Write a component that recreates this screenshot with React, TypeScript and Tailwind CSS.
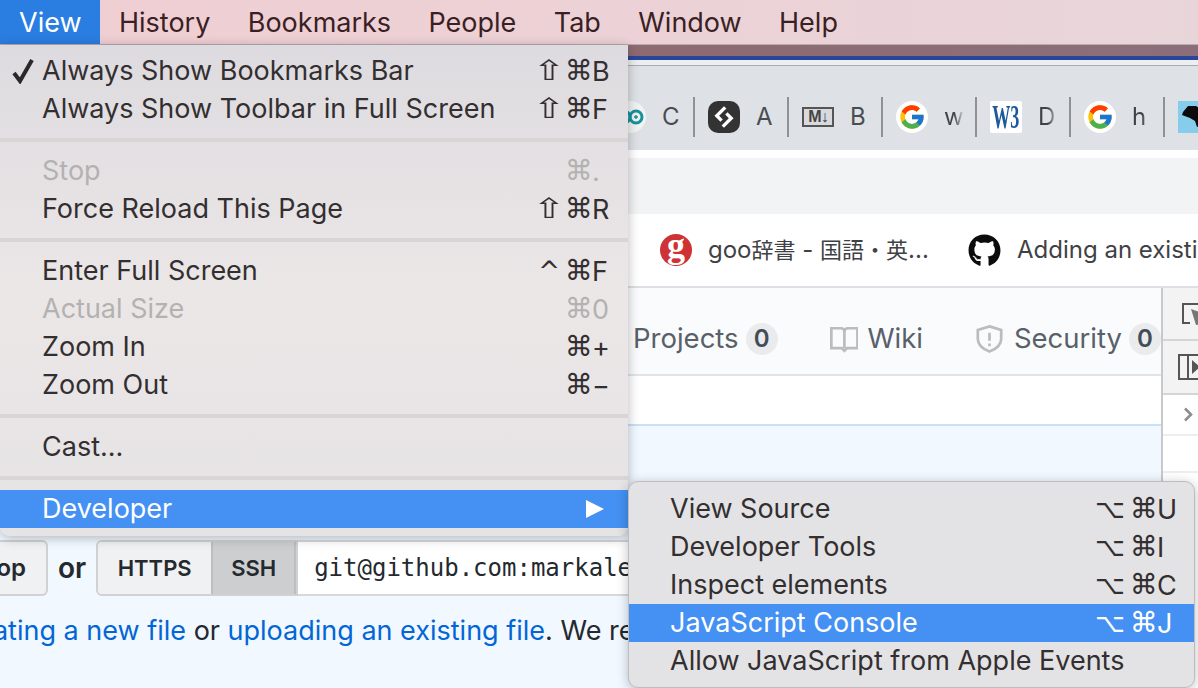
import type { ReactNode } from "react";
import { FcGoogle } from "react-icons/fc";
import { FaGithub } from "react-icons/fa";

const MENU_BAR = ["History", "Bookmarks", "People", "Tab", "Window", "Help"];

interface MenuItem {
  label: string;
  mod?: string;
  keyName?: string;
  noCmd?: boolean;
  disabled?: boolean;
  checked?: boolean;
  active?: boolean;
  arrow?: boolean;
}

const MAIN_MENU: MenuItem[][] = [
  [
    { label: "Always Show Bookmarks Bar", mod: "⇧", keyName: "B", checked: true },
    { label: "Always Show Toolbar in Full Screen", mod: "⇧", keyName: "F" },
  ],
  [
    { label: "Stop", keyName: ".", disabled: true },
    { label: "Force Reload This Page", mod: "⇧", keyName: "R" },
  ],
  [
    { label: "Enter Full Screen", mod: "^", keyName: "F" },
    { label: "Actual Size", keyName: "0", disabled: true },
    { label: "Zoom In", keyName: "+" },
    { label: "Zoom Out", keyName: "−" },
  ],
  [{ label: "Cast...", noCmd: true }],
  [{ label: "Developer", active: true, arrow: true, noCmd: true }],
];

const DEV_MENU: MenuItem[] = [
  { label: "View Source", mod: "⌥", keyName: "U" },
  { label: "Developer Tools", mod: "⌥", keyName: "I" },
  { label: "Inspect elements", mod: "⌥", keyName: "C" },
  { label: "JavaScript Console", mod: "⌥", keyName: "J", active: true },
  { label: "Allow JavaScript from Apple Events", noCmd: true },
];

function Shortcut({ item }: { item: MenuItem }) {
  if (item.noCmd) return null;
  return (
    <span className="flex items-center font-['DejaVu_Sans',sans-serif] leading-none">
      {item.mod === "⇧" ? (
        <span className="mr-[4px] inline-block w-[22px] scale-x-[1.4] text-center text-[28px]">{item.mod}</span>
      ) : (
        <span className="mr-[3px] text-[26px]">{item.mod}</span>
      )}
      <span className="w-[29px] pl-[2px] text-[28px]">⌘</span>
      <span className="w-[18px] font-['Inter',sans-serif] text-[27px]">{item.keyName}</span>
    </span>
  );
}

function Row({ item, inset }: { item: MenuItem; inset: string }) {
  const color = item.active
    ? "bg-[#4490f3] text-white"
    : item.disabled
      ? "text-[#b4b1b1]"
      : "text-[#332f30]";
  return (
    <div className={`relative flex h-[38px] items-center justify-between ${inset} ${color}`}>
      {item.checked && (
        <svg viewBox="0 0 24 26" className="absolute left-[11px] top-[6px] h-[26px] w-[24px]">
          <path d="M3 15 L9 23 L21 2" fill="none" stroke="#2b2829" strokeWidth="4" />
        </svg>
      )}
      <span>{item.label}</span>
      {item.arrow ? (
        <svg viewBox="0 0 18 18" className="mr-[6px] h-[18px] w-[18px]">
          <polygon points="0,0 18,9 0,18" fill="#fff" />
        </svg>
      ) : (
        <Shortcut item={item} />
      )}
    </div>
  );
}

function MainMenu() {
  return (
    <div className="absolute left-0 top-[45px] w-[628px] rounded-b-[10px] bg-gradient-to-b from-[#dedbe0] via-[#ebe7e7] to-[#e6e3e5] pb-[8px] pt-[7px] text-[27px] shadow-[0_2px_12px_rgba(0,0,0,0.28)]">
      {MAIN_MENU.map((section, i) => (
        <div key={i}>
          {i > 0 && <div className="my-[10px] h-[4px] bg-[#d9d5d5]" />}
          {section.map((item) => (
            <Row key={item.label} item={item} inset="pl-[42px] pr-[18px]" />
          ))}
        </div>
      ))}
    </div>
  );
}

function DevMenu() {
  return (
    <div className="absolute left-[628px] top-[481px] h-[207px] w-[567px] rounded-[10px] border border-[#bdbdbf] bg-[#e3e3e5] pt-[8px] text-[27px] shadow-[0_2px_12px_rgba(0,0,0,0.25)]">
      {DEV_MENU.map((item) => (
        <Row key={item.label} item={item} inset="pl-[41px] pr-[19px]" />
      ))}
    </div>
  );
}

function MenuBar() {
  return (
    <div className="flex h-[45px] shrink-0 border-b border-[#b7acb0] bg-gradient-to-r from-[#f0ced2] to-[#e8d5da] text-[27px] text-[#3a1f24]">
      <div className="flex w-[100px] items-center bg-[#2a7de1] pl-[19px] pt-[2px] text-white">View</div>
      <div className="flex items-center pl-[19px] pt-[2px]">
        {MENU_BAR.map((name) => (
          <span key={name} className="px-[18.7px] first:pl-0">
            {name}
          </span>
        ))}
      </div>
    </div>
  );
}

function SketchIcon() {
  return (
    <div className="flex h-[32px] w-[32px] items-center justify-center rounded-[10px] bg-[#333333]">
      <svg viewBox="0 0 20 20" className="h-[24px] w-[24px]">
        <path d="M11 2 L4 9 L8 13 M9 18 L16 11 L12 7" fill="none" stroke="#fff" strokeWidth="2.8" />
      </svg>
    </div>
  );
}

function ArduinoIcon() {
  return (
    <div className="h-[32px] w-[32px] rounded-full bg-[#f1f3f3]">
      <svg viewBox="0 0 32 32" className="h-[32px] w-[32px]">
        <circle cx="10" cy="16" r="6" fill="none" stroke="#17919a" strokeWidth="3" />
        <circle cx="22" cy="16" r="6" fill="none" stroke="#17919a" strokeWidth="3" />
        <path d="M20 16h4M22 14v4" stroke="#17919a" strokeWidth="1.4" />
      </svg>
    </div>
  );
}

function MarkdownIcon() {
  return (
    <div className="flex h-[20px] w-[32px] items-center justify-center border-2 border-[#555555] bg-[#d8dadd] font-['Liberation_Sans',sans-serif] text-[16px] font-bold leading-none tracking-[-1px] text-[#444444]">
      M↓
    </div>
  );
}

function GoogleIcon() {
  return (
    <div className="flex h-[32px] w-[32px] items-center justify-center rounded-full bg-white">
      <FcGoogle className="h-[28px] w-[28px]" />
    </div>
  );
}

function W3Icon() {
  return (
    <div className="flex h-[32px] w-[32px] items-center justify-center rounded-[2px] bg-white font-['Liberation_Serif',serif] text-[33px] font-bold leading-none text-[#1d5a9c]">
      <span className="scale-x-[0.55]">W3</span>
    </div>
  );
}

function BlobIcon() {
  return (
    <div className="h-[32px] w-[32px] bg-[#86cdec]">
      <svg viewBox="0 0 32 32" className="h-[32px] w-[32px]">
        <path d="M5 11 L10 5 L18 5 L24 9 L28 16 L24 24 L19 26 L17 20 L12 17 L4 14 Z" fill="#0b0b0b" />
      </svg>
    </div>
  );
}

const TABS: { icon: ReactNode; letter: string; fade?: boolean }[] = [
  { icon: <ArduinoIcon />, letter: "C" },
  { icon: <SketchIcon />, letter: "A" },
  { icon: <MarkdownIcon />, letter: "B" },
  { icon: <GoogleIcon />, letter: "w", fade: true },
  { icon: <W3Icon />, letter: "D", fade: true },
  { icon: <GoogleIcon />, letter: "h", fade: true },
  { icon: <BlobIcon />, letter: "" },
];

function BrowserTop() {
  return (
    <>
      <div className="h-[11px] shrink-0 bg-gradient-to-r from-[#6c5a68] via-[#8e6a70] to-[#8c6e7a]" />
      <div className="h-[4px] shrink-0 bg-[#29479a]" />
      <div className="h-[6px] shrink-0 border-b border-[#a9abad] bg-[#eceef0]" />
      <div className="flex h-[84px] shrink-0 bg-[#dee1e6] pl-[601px] pt-[31px]">
        {TABS.map((tab, i) => (
          <div
            key={i}
            className="flex h-[40px] w-[94px] shrink-0 items-center gap-[16px] border-r-2 border-[#8f9295] pl-[13px] last:border-r-0"
          >
            <div className="flex h-[32px] w-[32px] shrink-0 items-center justify-center">{tab.icon}</div>
            <span
              className={`w-[20px] overflow-hidden text-[24px] ${
                tab.fade
                  ? "bg-gradient-to-r from-[#3f4245] from-50% to-[#dee1e6] bg-clip-text text-transparent"
                  : "text-[#4a4d50]"
              }`}
            >
              {tab.letter}
            </span>
          </div>
        ))}
      </div>
      <div className="h-[8px] shrink-0 bg-white" />
      <div className="h-[56px] shrink-0 bg-[#f1f3f4]" />
      <div className="flex h-[72px] shrink-0 items-center whitespace-nowrap bg-white pl-[660px] text-[24px] text-[#3f4245]">
        <div className="flex h-[32px] w-[32px] shrink-0 items-center justify-center rounded-full bg-[#cf3234] font-['Liberation_Serif',serif] text-[36px] font-bold leading-none text-white">
          <span className="-mt-[10px]">g</span>
        </div>
        <span className="ml-[16px] w-[260px] shrink-0">
          goo<span className="font-['Noto_Sans_CJK_JP',sans-serif] text-[22px]">辞書</span> -{" "}
          <span className="font-['Noto_Sans_CJK_JP',sans-serif] text-[22px]">国語・英</span>...
        </span>
        <FaGithub className="h-[33px] w-[33px] shrink-0 text-[#0c0c0c]" />
        <span className="ml-[16px]">Adding an existing</span>
      </div>
    </>
  );
}

function CountBadge() {
  return (
    <span className="flex h-[32px] w-[32px] shrink-0 items-center justify-center rounded-full bg-[#e9ebed] text-[24px] font-semibold text-[#444d56]">
      0
    </span>
  );
}

function RepoNav() {
  return (
    <div className="flex h-[88px] shrink-0 items-center whitespace-nowrap border-b-2 border-[#e1e4e8] bg-[#fafbfc] pl-[633px] pt-[16px] text-[27.5px] text-[#586069]">
      <span>Projects</span>
      <span className="ml-[7px]">
        <CountBadge />
      </span>
      <svg viewBox="0 0 32 29" className="ml-[52px] h-[29px] w-[32px]">
        <path
          d="M1.5 2 H12 Q16 2 16 6 Q16 2 20 2 H30.5 V24 H19 L16 27 L13 24 H1.5 Z M16 6 V24"
          fill="none"
          stroke="#babcbe"
          strokeWidth="3"
        />
      </svg>
      <span className="ml-[9px]">Wiki</span>
      <svg viewBox="0 0 30 32" className="ml-[53px] h-[32px] w-[30px]">
        <path d="M15 2 L28 6 V16 Q28 25 15 30 Q2 25 2 16 V6 Z" fill="none" stroke="#babcbe" strokeWidth="3" />
        <path d="M15 9 V18 M15 21 V24" stroke="#babcbe" strokeWidth="3" />
      </svg>
      <span className="ml-[11px]">Security</span>
      <span className="ml-[7px]">
        <CountBadge />
      </span>
    </div>
  );
}

function CloneRow() {
  return (
    <div className="flex h-[56px] items-stretch whitespace-nowrap">
      <div className="flex w-[48px] justify-end overflow-hidden rounded-r-[6px] border-2 border-l-0 border-[#cfd1d3] bg-[#f0f1f2] pr-[20px]">
        <span className="self-center text-[24px] font-semibold text-[#24292e]">Desktop</span>
      </div>
      <span className="ml-[10px] self-center text-[28px] font-semibold text-[#24292e]">or</span>
      <div className="ml-[10px] flex overflow-hidden rounded-l-[6px] border-2 border-[#cfd1d3] text-[22px] font-semibold text-[#24292e]">
        <span className="flex w-[113px] items-center justify-center bg-[#f0f1f2]">HTTPS</span>
        <span className="flex w-[85px] items-center justify-center border-x-2 border-[#bdbebf] bg-[#cdcecf]">SSH</span>
      </div>
      <div className="flex flex-1 items-center border-y-2 border-[#d6d8da] bg-white pl-[16px] font-['DejaVu_Sans_Mono',monospace] text-[24px] text-[#24292e]">
        git@github.com:markalex/repo.git
      </div>
    </div>
  );
}

function RepoBody() {
  return (
    <div className="flex min-h-0 flex-1 border-t-2 border-[#dcdfe3]">
      <div className="flex w-[1161px] shrink-0 flex-col">
        <RepoNav />
        <div className="h-[50px] shrink-0 border-b-2 border-[#c9e0f7] bg-white" />
        <div className="flex-1 bg-[#f1f8ff] pt-[114px]">
          <CloneRow />
          <p className="-ml-[87px] mt-[15px] whitespace-nowrap text-[27px] text-[#24292e]">
            <span className="text-[#0366d6]">by creating a new file</span> or{" "}
            <span className="text-[#0366d6]">uploading an existing file</span>. We recommend every repository
          </p>
        </div>
      </div>
      <div className="flex-1 border-l-2 border-[#c8c9ca]">
        <div className="flex h-[53px] items-center border-b-2 border-[#d4d5d6] bg-[#f3f3f3] pl-[19px]">
          <svg viewBox="0 0 20 24" className="h-[24px] w-[20px] shrink-0">
            <path d="M19 2 H1 V21 H8" fill="none" stroke="#555" strokeWidth="2" />
            <path d="M9 7 L20 11 V22 L14 23 Z" fill="#777" />
          </svg>
        </div>
        <div className="flex h-[54px] items-center border-b-2 border-[#d4d5d6] bg-[#f3f3f3] pl-[15px]">
          <svg viewBox="0 0 22 26" className="h-[26px] w-[22px] shrink-0">
            <path d="M22 1 H1 V25 H22 M10 1 V25" fill="none" stroke="#555" strokeWidth="2" />
            <polygon points="14,6 22,13 14,20" fill="#555" />
          </svg>
        </div>
        <div className="flex h-[41px] items-center border-b-2 border-[#eeeeee] bg-white pl-[20px]">
          <svg viewBox="0 0 10 15" className="h-[15px] w-[10px]">
            <path d="M2 1.5 L8 7.5 L2 13.5" fill="none" stroke="#8d8d8d" strokeWidth="2.6" />
          </svg>
        </div>
        <div className="h-[37px] border-b-2 border-[#eeeeee] bg-white" />
      </div>
    </div>
  );
}

export default function App() {
  return (
    <div className="relative flex h-[688px] w-[1198px] flex-col overflow-hidden bg-white font-['Inter',sans-serif]">
      <MenuBar />
      <BrowserTop />
      <RepoBody />
      <MainMenu />
      <DevMenu />
    </div>
  );
}
